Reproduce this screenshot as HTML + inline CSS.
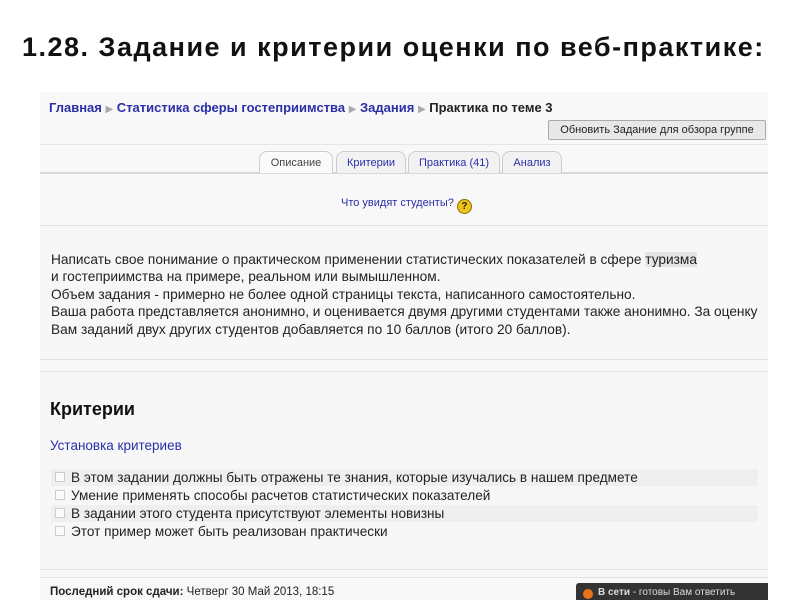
<!DOCTYPE html><html><head><meta charset="utf-8"><style>
body{margin:0;width:800px;height:600px;background:#fff;font-family:"Liberation Sans",sans-serif;position:relative;overflow:hidden}
.a{position:absolute;white-space:nowrap}
h1{position:absolute;left:22px;top:32px;margin:0;font-size:27px;font-weight:bold;color:#111;letter-spacing:1.5px}
.shot{position:absolute;left:40px;top:92px;width:728px;height:508px;background:#f8f8f8}
.bc{font-size:13px;font-weight:bold;color:#2b2fa8}
.bc span{color:#aaa;font-weight:normal;font-size:10px}
.box{position:absolute;left:0;width:728px;border-top:1px solid #e2e2e2;border-bottom:1px solid #e2e2e2;background:#f7f7f7}
.t{font-size:13.7px;color:#222;line-height:17.4px}
.tab{position:absolute;top:151px;height:21px;border:1px solid #ccc;border-bottom:none;border-radius:8px 8px 0 0;background:#f2f2f2;font-size:11px;color:#2b2fa8;text-align:center;line-height:22px}
.cr{position:absolute;left:51px;width:707px;height:17px;font-size:13.6px;color:#222;line-height:17px}
.cb{display:inline-block;width:8px;height:8px;border:1px solid #ccc;margin:0 6px 0 4px;vertical-align:0px;background:#fafafa}
</style></head><body>
<h1>1.28. Задание и критерии оценки по веб-практике:</h1>
<div class="shot"></div>
<div class="a bc" style="left:49px;top:100px">Главная <span>▶</span> Статистика сферы гостеприимства <span>▶</span> Задания <span>▶</span> <b style="color:#222">Практика по теме 3</b></div>
<div class="a" style="left:548px;top:120px;width:216px;height:18px;border:1px solid #aaa;border-radius:2px;background:#e8e8e8;font-size:11px;color:#222;text-align:center;line-height:18px">Обновить Задание для обзора группе</div>
<div class="a" style="left:40px;top:144px;width:728px;height:1px;background:#e5e5e5"></div>
<div class="a" style="left:40px;top:172px;width:728px;height:2px;background:#d8d8d8"></div>
<div class="tab" style="left:259px;width:72px;color:#444;background:#fafafa">Описание</div>
<div class="tab" style="left:336px;width:68px">Критерии</div>
<div class="tab" style="left:408px;width:90px">Практика (41)</div>
<div class="tab" style="left:502px;width:58px">Анализ</div>
<div class="a" style="left:341px;top:197px;font-size:11px;color:#2b2fa8">Что увидят студенты? <span style="display:inline-block;width:13px;height:13px;border-radius:50%;background:#f0c419;border:1px solid #8a6d00;color:#222;font-size:10px;font-weight:bold;text-align:center;line-height:13px;vertical-align:-3px">?</span></div>
<div class="box" style="top:225px;left:40px;height:133px"></div>
<div class="a t" style="left:51px;top:251px">Написать свое понимание о практическом применении статистических показателей в сфере <span style="background:#e4e4e4">туризма</span><br>и гостеприимства на примере, реальном или вымышленном.<br>Объем задания - примерно не более одной страницы текста, написанного самостоятельно.<br>Ваша работа представляется анонимно, и оценивается двумя другими студентами также анонимно. За оценку<br>Вам заданий двух других студентов добавляется по 10 баллов (итого 20 баллов).</div>
<div class="box" style="top:371px;left:40px;height:197px"></div>
<div class="a" style="left:50px;top:399px;font-size:18px;font-weight:bold;color:#111">Критерии</div>
<div class="a" style="left:50px;top:438px;font-size:13.5px;color:#2b2fa8">Установка критериев</div>
<div class="cr" style="top:469px;background:#efefef"><span class="cb"></span>В этом задании должны быть отражены те знания, которые изучались в нашем предмете</div>
<div class="cr" style="top:487px"><span class="cb"></span>Умение применять способы расчетов статистических показателей</div>
<div class="cr" style="top:505px;background:#efefef"><span class="cb"></span>В задании этого студента присутствуют элементы новизны</div>
<div class="cr" style="top:523px"><span class="cb"></span>Этот пример может быть реализован практически</div>
<div class="a" style="left:40px;top:577px;width:728px;height:1px;background:#e2e2e2"></div>
<div class="a" style="left:50px;top:586px;font-size:11.5px;color:#222"><b>Последний срок сдачи:</b> Четверг 30 Май 2013, 18:15</div>
<div class="a" style="left:576px;top:583px;width:192px;height:17px;background:#333;border-radius:3px 0 0 0;font-size:10px;color:#ddd;line-height:20px;padding-left:22px;box-sizing:border-box"><span style="position:absolute;left:7px;top:6px;width:10px;height:10px;border-radius:50%;background:#e8731a"></span><b>В сети</b> - готовы Вам ответить</div>
</body></html>
